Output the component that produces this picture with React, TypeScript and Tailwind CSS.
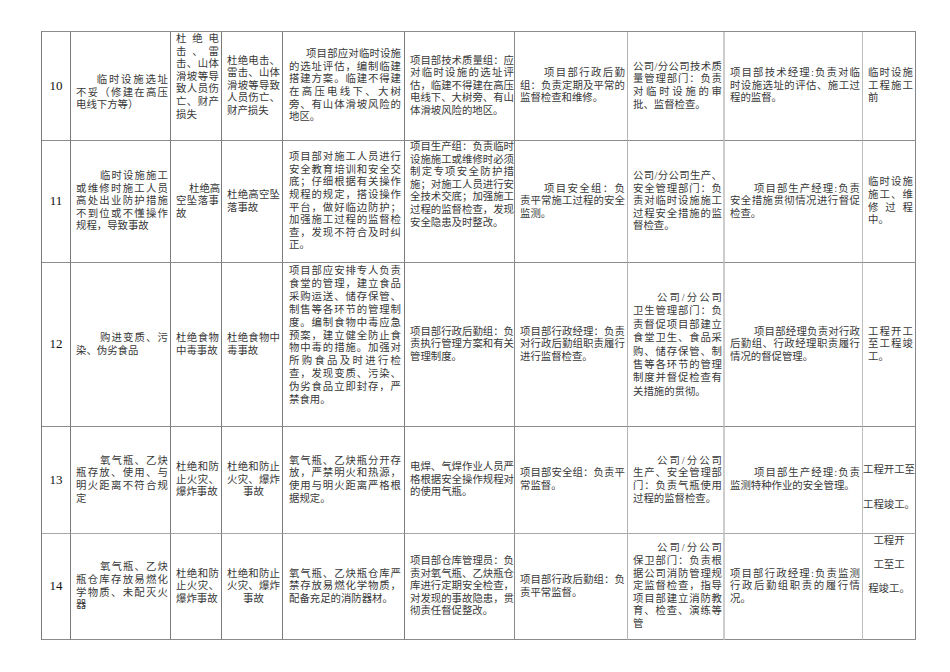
import clsx from "clsx";

type Cell = {
  l: string[];
  ind?: string;
  top?: boolean;
  pad?: string;
  last?: string;
  plain?: boolean;
  center?: boolean;
  cls?: string;
};

// right border + default padding per column (col 1 is the row number)
const colBorder = [
  "border-r-[#7a7a7a]",
  "border-r-[#7a7a7a]",
  "border-r-[#7a7a7a]",
  "border-r-[#7a7a7a]",
  "border-r-[#7a7a7a]",
  "border-r-[#8a8a8a]",
  "border-r-[#b3b3b3]",
  "border-r-2 border-r-[#cdcdcd]",
  "border-r-[#bdbdbd]",
  "border-r-[#858585]",
];

const colPad = [
  "",
  "pl-[5px] pr-[2px]",
  "pl-[5px] pr-[2px]",
  "pl-[5px] pr-[2px]",
  "pl-[6px] pr-[3px]",
  "pl-[5px] pr-0",
  "pl-[5px] pr-[2px]",
  "pl-[5px] pr-[1px]",
  "pl-[5px] pr-[2px]",
  "pl-[5px] pr-[2px]",
];

const rowBorder = [
  "border-b-[#8c8c8c]",
  "border-b-[#8c8c8c]",
  "border-b-[#8c8c8c]",
  "border-b-[#a8a8a8]",
  "border-b-[#8c8c8c]",
];

const I = "indent-[2em]";
const I8 = "indent-[24px]";

const rows: { no: string; cells: Cell[] }[] = [
  {
    no: "10",
    cells: [
      { l: ["临时设施选址", "不妥（修建在高压", "电线下方等）"], ind: I, cls: "pt-[14px]" },
      { l: ["杜绝电", "击、雷", "击、山体", "滑坡等导", "致人员伤", "亡、财产", "损失"], top: true, cls: "pt-px" },
      { l: ["杜绝电击、", "雷击、山体", "滑坡等导致", "人员伤亡、", "财产损失"] },
      {
        l: ["项目部应对临时设施", "的选址评估，编制临建", "搭建方案。临建不得建", "在高压电线下、大树", "旁、有山体滑坡风险的", "地区。"],
        ind: "indent-[17px]",
      },
      { l: ["项目部技术质量组：应", "对临时设施的选址评", "估，临建不得建在高压", "电线下、大树旁、有山", "体滑坡风险的地区。"] },
      { l: ["项目部行政后勤", "组：负责定期及平常的", "监督检查和维修。"], ind: I8 },
      { l: ["公司/分公司技术质", "量管理部门：负责", "对临时设施的审", "批、监督检查。"] },
      { l: ["项目部技术经理:负责对临", "时设施选址的评估、施工过", "程的监督。"] },
      { l: ["临时设施", "工程施工", "前"] },
    ],
  },
  {
    no: "11",
    cells: [
      { l: ["临时设施施工", "或维修时施工人员", "高处出业防护措施", "不到位或不懂操作", "规程，导致事故"], ind: I8 },
      { l: ["杜绝高", "空坠落事", "故"], ind: "indent-[13px]" },
      { l: ["杜绝高空坠", "落事故"] },
      {
        l: ["项目部对施工人员进行", "安全教育培训和安全交", "底；仔细根据有关操作", "规程的规定，搭设操作", "平台，做好临边防护；", "加强施工过程的监督检", "查，发现不符合及时纠", "正。"],
      },
      {
        l: ["项目生产组：负责临时", "设施施工或维修时必须", "制定专项安全防护措", "施；对施工人员进行安", "全技术交底；加强施工", "过程的监督检查，发现", "安全隐患及时整改。"],
        top: true,
      },
      { l: ["项目安全组：负", "责平常施工过程的安全", "监测。"], ind: I8 },
      { l: ["公司/分公司生产、", "安全管理部门：负", "责对临时设施施工", "过程安全措施的监", "督检查。"] },
      { l: ["项目部生产经理:负责", "安全措施贯彻情况进行督促", "检查。"], ind: I8 },
      { l: ["临时设施", "施工、维", "修过程", "中。"] },
    ],
  },
  {
    no: "12",
    cells: [
      { l: ["购进变质、污", "染、伪劣食品"], ind: I8 },
      { l: ["杜绝食物", "中毒事故"] },
      { l: ["杜绝食物中", "毒事故"] },
      {
        l: ["项目部应安排专人负责", "食堂的管理，建立食品", "采购运送、储存保管、", "制售等各环节的管理制", "度。编制食物中毒应急", "预案，建立健全防止食", "物中毒的措施。加强对", "所购食品及时进行检", "查，发现变质、污染、", "伪劣食品立即封存，严", "禁食用。"],
        top: true,
        cls: "pt-[2px] leading-[12.9px]",
      },
      { l: ["项目部行政后勤组：负", "责执行管理方案和有关", "管理制度。"] },
      { l: ["项目部行政经理：负责", "对行政后勤组职责履行", "进行监督检查。"] },
      {
        l: ["公司/分公司", "卫生管理部门：负", "责督促项目部建立", "食堂卫生、食品采", "购、储存保管、制", "售等各环节的管理", "制度并督促检查有", "关措施的贯彻。"],
        ind: I8,
        cls: "leading-[13.4px]",
      },
      { l: ["项目部经理负责对行政", "后勤组、行政经理职责履行", "情况的督促管理。"], ind: I8 },
      { l: ["工程开工", "至工程竣", "工。"] },
    ],
  },
  {
    no: "13",
    cells: [
      { l: ["氧气瓶、乙炔", "瓶存放、使用、与", "明火距离不符合规", "定"], ind: I8 },
      { l: ["杜绝和防", "止火灾、", "爆炸事故"] },
      { l: ["杜绝和防止", "火灾、爆炸", "事故"], last: "text-center" },
      { l: ["氧气瓶、乙炔瓶分开存", "放，严禁明火和热源，", "使用与明火距离严格根", "据规定。"] },
      { l: ["电焊、气焊作业人员严", "格根据安全操作规程对", "的使用气瓶。"] },
      { l: ["项目部安全组：负责平", "常监督。"] },
      { l: ["公司/分公司", "生产、安全管理部", "门：负责气瓶使用", "过程的监督检查。"], ind: I8 },
      { l: ["项目部生产经理:负责", "监测特种作业的安全管理。"], ind: I8 },
      {
        l: ["工程开工至", "工程竣工。"],
        top: true,
        plain: true,
        pad: "pl-0 pr-0 pt-[37px] gap-[22px]",
      },
    ],
  },
  {
    no: "14",
    cells: [
      { l: ["氧气瓶、乙炔", "瓶仓库存放易燃化", "学物质、未配灭火", "器"], ind: I8 },
      { l: ["杜绝和防", "止火灾、", "爆炸事故"] },
      { l: ["杜绝和防止", "火灾、爆炸", "事故"], last: "text-center" },
      { l: ["氧气瓶、乙炔瓶仓库严", "禁存放易燃化学物质，", "配备充足的消防器材。"] },
      {
        l: ["项目部仓库管理员：负", "责对氧气瓶、乙炔瓶仓", "库进行定期安全检查，", "对发现的事故隐患，贯", "彻责任督促整改。"],
      },
      { l: ["项目部行政后勤组：负", "责平常监督。"] },
      {
        l: ["公司/分公司", "保卫部门：负责根", "据公司消防管理规", "定监督检查，指导", "项目部建立消防教", "育、检查、演练等", "管"],
        ind: I8,
      },
      { l: ["项目部行政经理:负责监测", "行政后勤组职责的履行情", "况。"] },
      {
        l: ["工程开", "工至工", "程竣工。"],
        top: true,
        plain: true,
        center: true,
        pad: "pl-0 pr-0 pt-px gap-[11.5px]",
      },
    ],
  },
];

const TextCell = ({ c, ci, ri }: { c: Cell; ci: number; ri: number }) => (
  <div
    className={clsx(
      "flex flex-col border-b border-r",
      c.top ? "justify-start" : "justify-center",
      colBorder[ci],
      rowBorder[ri],
      c.pad ?? colPad[ci],
      c.cls
    )}
  >
    {c.l.map((t, i) => {
      const last = i === c.l.length - 1;
      return (
        <div
          key={i}
          className={clsx(
            "whitespace-nowrap",
            !last && !c.plain && "text-justify [text-align-last:justify]",
            i === 0 && c.ind,
            last && c.last,
            c.center && "text-center"
          )}
        >
          {t}
        </div>
      );
    })}
  </div>
);

export default function App() {
  return (
    <div className="min-h-screen bg-white pl-[41px] pt-[31px] font-['Liberation_Serif','Noto_Sans_CJK_SC',serif] text-[10.4px] leading-[12.6px] text-[#383838]">
      <div className="grid w-fit grid-cols-[29px_100px_51px_61px_122px_110px_113px_97px_138px_53px] grid-rows-[109px_122px_164px_107px_106px] border-l border-t border-l-[#7a7a7a] border-t-[#8c8c8c]">
        {rows.map((r, ri) => [
          <div
            key={`n${ri}`}
            className={clsx(
              "flex items-center justify-center border-b border-r text-[13px] text-[#111]",
              colBorder[0],
              rowBorder[ri]
            )}
          >
            {r.no}
          </div>,
          ...r.cells.map((c, i) => <TextCell key={`${ri}-${i}`} c={c} ci={i + 1} ri={ri} />),
        ])}
      </div>
    </div>
  );
}
